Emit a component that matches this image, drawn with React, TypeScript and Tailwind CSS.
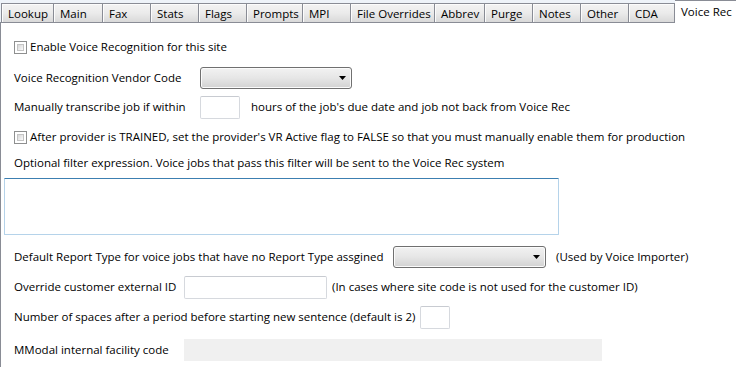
import React from 'react';

const tabs = [
  { label: 'Lookup', w: 'w-[52px]' },
  { label: 'Main', w: 'w-[49px]' },
  { label: 'Fax', w: 'w-[48px]' },
  { label: 'Stats', w: 'w-[48px]' },
  { label: 'Flags', w: 'w-[48px]' },
  { label: 'Prompts', w: 'w-[56px]' },
  { label: 'MPI', w: 'w-[48px]' },
  { label: 'File Overrides', w: 'w-[84px]' },
  { label: 'Abbrev', w: 'w-[50px]' },
  { label: 'Purge', w: 'w-[48px]' },
  { label: 'Notes', w: 'w-[48px]' },
  { label: 'Other', w: 'w-[48px]' },
  { label: 'CDA', w: 'w-[47px]' },
];

function Checkbox() {
  return (
    <div className="w-[13px] h-[13px] shrink-0 border border-[#8e8f8f] bg-white p-[2px]">
      <div className="w-full h-full border border-[#c4c4c4] bg-gradient-to-br from-[#d7d7d7] to-[#fafafa]" />
    </div>
  );
}

function Select({ width }: { width: string }) {
  return (
    <div
      className={`${width} h-[22px] shrink-0 rounded-[3px] border border-[#707070] bg-gradient-to-b from-[#f2f2f2] via-[#e6e6e6] to-[#d2d2d2] shadow-[inset_0_0_0_1px_#fbfbfb] flex items-center justify-end pr-[5px]`}
    >
      <svg width="7" height="4" viewBox="0 0 7 4">
        <path d="M0 0 H7 L3.5 4 Z" fill="#000" />
      </svg>
    </div>
  );
}

function TextBox({ width }: { width: string }) {
  return <div className={`${width} h-[23px] shrink-0 rounded-[2px] border border-[#d6d9de] border-t-[#c8cbd1] bg-white`} />;
}

export default function App() {
  return (
    <div className="w-[736px] h-[367px] bg-white overflow-hidden text-[11.5px] text-black leading-none" style={{ fontFamily: '"Open Sans", "Noto Sans", sans-serif' }}>
      {/* tab strip */}
      <div className="h-[23px] flex items-end bg-[#eef3f9]">
        <div className="w-[1px] h-[20px] border-b border-[#898c95]" />
        {tabs.map((t, i) => (
          <div
            key={t.label}
            className={`${t.w} h-[20px] shrink-0 border-t border-l border-b border-[#898c95] ${i === tabs.length - 1 ? 'border-r' : ''} bg-gradient-to-b from-[#f3f3f3] via-[#ebebeb] to-[#d9d9d9] shadow-[inset_1px_1px_0_#fcfcfc] flex items-center pl-[6px] pt-[1px] whitespace-nowrap`}
          >
            {t.label}
          </div>
        ))}
        <div className="flex-1 h-[23px] border-t border-[#898c95] bg-white flex items-center pl-[6px] pb-[1px] whitespace-nowrap">
          Voice Rec
        </div>
      </div>

      {/* panel */}
      <div className="h-[344px] border-l border-[#898c95] pt-[13px] whitespace-nowrap">
        <div className="h-[22px] flex items-center pl-[13px]">
          <Checkbox />
          <span className="ml-[3px]">Enable Voice Recognition for this site</span>
        </div>

        <div className="h-[22px] mt-[9px] flex items-center pl-[13px]">
          <span className="w-[186px] shrink-0">Voice Recognition Vendor Code</span>
          <Select width="w-[152px]" />
        </div>

        <div className="h-[22px] mt-[7px] flex items-center pl-[13px]">
          <span className="w-[186px] shrink-0">Manually transcribe job if within</span>
          <TextBox width="w-[40px]" />
          <span className="ml-[11px]">hours of the job's due date and job not back from Voice Rec</span>
        </div>

        <div className="h-[22px] mt-[8px] flex items-center pl-[13px]">
          <Checkbox />
          <span className="ml-[3px]">
            After provider is TRAINED, set the provider's VR Active flag to FALSE so that you must manually enable them for production
          </span>
        </div>

        <div className="h-[22px] mt-[4px] flex items-center pl-[13px]">
          Optional filter expression. Voice jobs that pass this filter will be sent to the Voice Rec system
        </div>

        <div className="ml-[3px] mt-[4px] w-[555px] h-[57px] border border-[#b5d3ea] border-t-[#3c7fb1] rounded-[1px] bg-white" />

        <div className="h-[22px] mt-[11px] flex items-center pl-[13px]">
          <span className="w-[379px] shrink-0">Default Report Type for voice jobs that have no Report Type assgined</span>
          <Select width="w-[153px]" />
          <span className="ml-[10px]">(Used by Voice Importer)</span>
        </div>

        <div className="h-[22px] mt-[8px] flex items-center pl-[13px]">
          <span className="w-[170px] shrink-0">Override customer external ID</span>
          <TextBox width="w-[143px]" />
          <span className="ml-[5px]">(In cases where site code is not used for the customer ID)</span>
        </div>

        <div className="h-[22px] mt-[8px] flex items-center pl-[13px]">
          <span className="w-[406px] shrink-0">Number of spaces after a period before starting new sentence (default is 2)</span>
          <TextBox width="w-[30px]" />
        </div>

        <div className="h-[22px] mt-[11px] flex items-center pl-[13px]">
          <span className="w-[170px] shrink-0">MModal internal facility code</span>
          <div className="w-[418px] h-[22px] shrink-0 bg-[#f0f0f0]" />
        </div>
      </div>
    </div>
  );
}
